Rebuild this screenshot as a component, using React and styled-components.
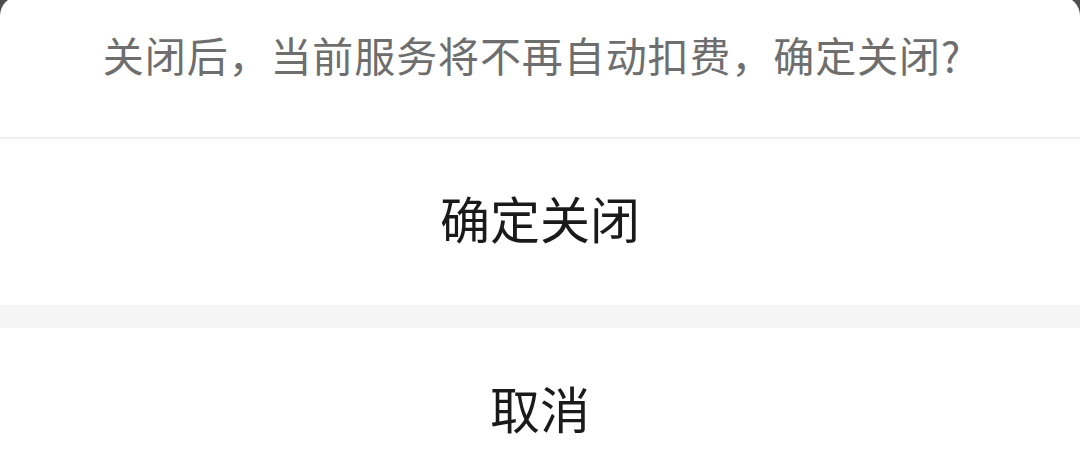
import React from "react"
import styled, { createGlobalStyle } from "styled-components"

const GlobalStyle = createGlobalStyle`
  html, body {
    margin: 0;
    padding: 0;
    height: 457px;
    overflow: hidden;
    background: #4d4d4d;
  }
  body {
    font-family: "Noto Sans CJK SC", "Noto Sans", sans-serif;
  }
`

const Sheet = styled.div`
  margin-top: -4px;
  background: #fff;
  border-radius: 20px 20px 0 0;
  overflow: hidden;
`

const Notice = styled.div`
  height: 143px;
  display: flex;
  align-items: center;
  justify-content: center;
  padding: 0 16px 26px 0;
  box-sizing: border-box;
  border-bottom: 2px solid #eeeeee;
  font-size: 41px;
  color: #6e6e6e;
  letter-spacing: 0.9px;
`

const Action = styled.button`
  display: flex;
  width: 100%;
  height: ${(p) => p.height}px;
  align-items: center;
  justify-content: center;
  border: 0;
  margin: 0;
  padding: 0 0 ${(p) => p.shift || 0}px;
  box-sizing: border-box;
  background: #fff;
  font-family: inherit;
  font-size: 50px;
  color: #1a1a1a;
`

const Gap = styled.div`
  height: 23px;
  background: #f5f5f5;
`

export default function App() {
  return (
    <>
      <GlobalStyle />
      <Sheet>
        <Notice>关闭后，当前服务将不再自动扣费，确定关闭?</Notice>
        <Action height={166} shift={10}>确定关闭</Action>
        <Gap />
        <Action height={157}>取消</Action>
      </Sheet>
    </>
  )
}
